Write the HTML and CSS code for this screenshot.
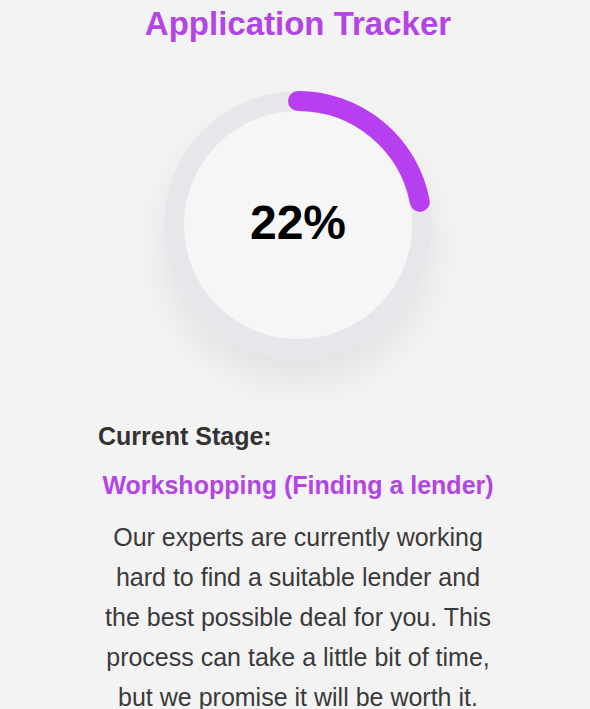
FILE: index.html
```html
<!DOCTYPE html>
<html lang="en">
<head>
<meta charset="utf-8">
<title>Application Tracker</title>
<link rel="stylesheet" href="styles.css">
</head>
<body>
<main class="page">
  <h1 class="title">Application Tracker</h1>
  <div class="ring">
    <svg class="ring-svg" width="268" height="268" viewBox="0 0 268 268">
      <circle cx="134" cy="134" r="124" fill="#f6f6f7" stroke="#e5e7eb" stroke-width="20"/>
      <circle cx="134" cy="134" r="124" fill="none" stroke="#b73ff0" stroke-width="20" stroke-linecap="round" stroke-dasharray="171.4 779.1" transform="rotate(-90 134 134)"/>
    </svg>
    <div class="percent">22%</div>
  </div>
  <section class="stage">
    <h2 class="stage-label">Current Stage:</h2>
    <h3 class="stage-name">Workshopping (Finding a lender)</h3>
    <p class="stage-text">Our experts are currently working hard to find a suitable lender and the best possible deal for you. This process can take a little bit of time, but we promise it will be worth it.</p>
  </section>
</main>
</body>
</html>
```

FILE: styles.css
```css
html, body {
  margin: 0;
  padding: 0;
  background: #f3f3f3;
}
body {
  font-family: "Liberation Sans", Arial, Helvetica, sans-serif;
  overflow: hidden;
}
.page {
  padding-left: 6px;
  display: flex;
  flex-direction: column;
  align-items: center;
}
.title {
  margin: 0;
  padding-top: 4px;
  font-size: 33px;
  line-height: 40px;
  font-weight: 700;
  color: #b245e4;
  text-align: center;
}
.ring {
  position: relative;
  width: 268px;
  height: 268px;
  margin-top: 47px;
  border-radius: 50%;
  box-shadow: 0 22px 40px rgba(0, 0, 0, 0.07);
}
.ring-svg {
  display: block;
}
.percent {
  position: absolute;
  inset: 0;
  display: flex;
  align-items: center;
  justify-content: center;
  padding-bottom: 6px;
  font-size: 48px;
  font-weight: 700;
  color: #000;
}
.stage {
  width: 400px;
  margin-top: 62px;
}
.stage-label {
  margin: 0;
  font-size: 25px;
  line-height: 30px;
  font-weight: 700;
  color: #333;
}
.stage-name {
  margin: 19px 0 0;
  font-size: 25px;
  line-height: 30px;
  font-weight: 700;
  color: #b245e4;
  text-align: center;
}
.stage-text {
  margin: 17px 0 0;
  font-size: 25px;
  line-height: 40px;
  color: #3a3a3a;
  text-align: center;
}
```
